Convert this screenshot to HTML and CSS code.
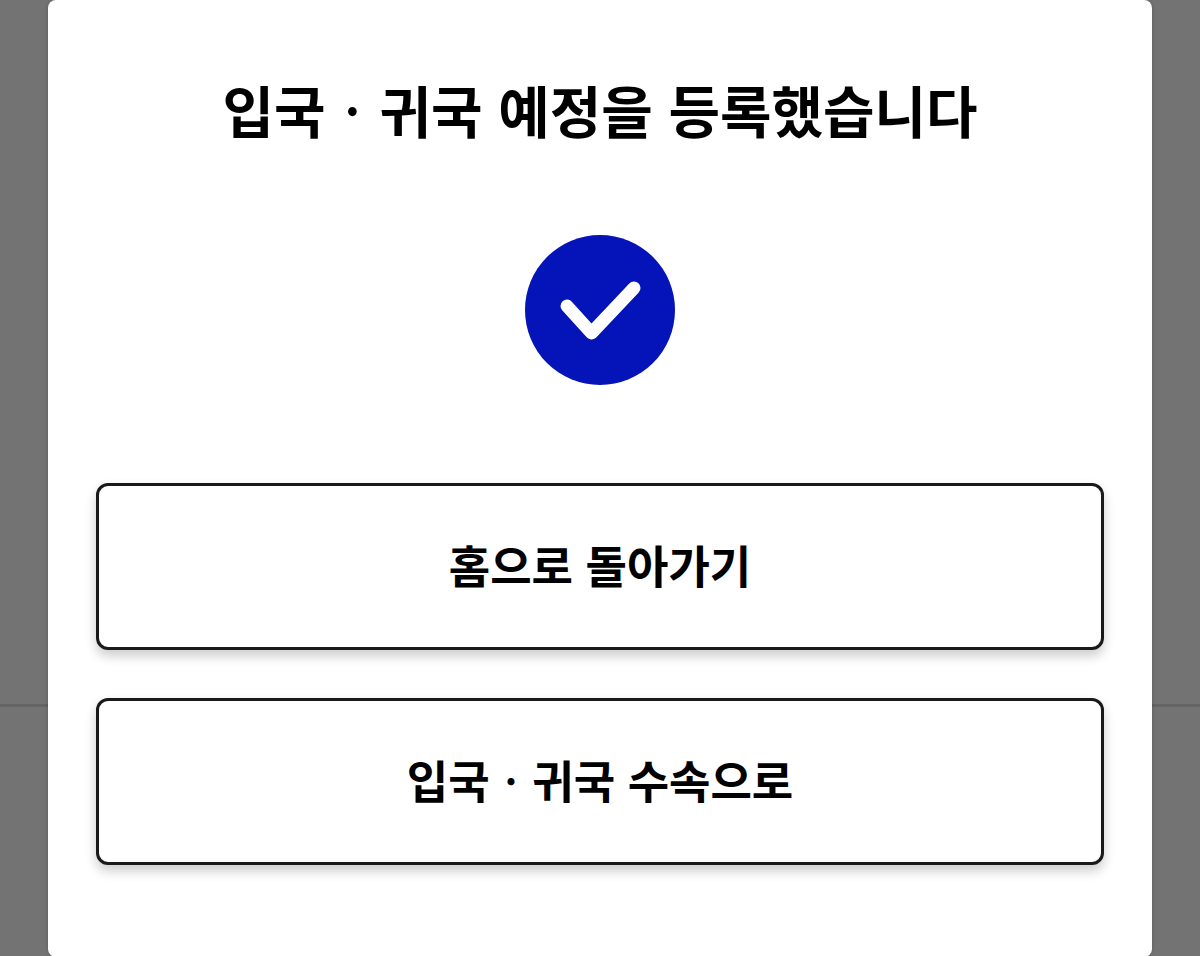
FILE: index.html
```html
<!DOCTYPE html>
<html lang="ko">
<head>
	<meta charset="UTF-8">
	<meta name="viewport" content="width=device-width, initial-scale=1">
	<title>입국 · 귀국 예정</title>
	<link rel="stylesheet" href="styles.css">
</head>
<body>
	<div class="page-line"></div>
	<main class="modal" role="dialog" aria-labelledby="title">
		<h1 class="title" id="title">입국 <span class="dot">·</span> 귀국 예정을 등록했습니다</h1>
		<svg class="check" viewBox="0 0 150 150" aria-hidden="true">
			<circle cx="75" cy="75" r="75" fill="#0514b8"/>
			<path d="M42 71L66.500 98L109 53" fill="none" stroke="#fff" stroke-width="13" stroke-linecap="round" stroke-linejoin="round"/>
		</svg>
		<div class="buttons">
			<button class="btn" type="button">홈으로 돌아가기</button>
			<button class="btn" type="button">입국 <span class="dot">·</span> 귀국 수속으로</button>
		</div>
	</main>
</body>
</html>
```
FILE: styles.css
```css
*{
	box-sizing: border-box;
	margin: 0;
	padding: 0;
}
body{
	position: relative;
	min-height: 100vh;
	padding: 0 48px;
	background-color: #737373;
	font-family: "Noto Sans CJK KR", sans-serif;
	color: #000;
}
/* divider of the page behind the dialog */
.page-line{
	position: absolute;
	top: 704px;
	left: 0;
	right: 0;
	height: 3px;
	background-color: #656565;
}
.modal{
	position: relative;
	display: flex;
	flex-direction: column;
	align-items: center;
	padding: 69px 48px 92px;
	background-color: #fff;
	border-radius: 8px;
	box-shadow: 0 0 4px rgba(0,0,0,0.2);
}
.title{
	font-size: 56px;
	line-height: 80px;
	font-weight: 700;
	text-align: center;
}
.dot{
	margin: 0 2px;
	font-weight: 500;
}
.title .dot{
	margin: 0 3px;
}
.check{
	width: 150px;
	height: 150px;
	margin: 86px 0 98px;
}
.buttons{
	display: flex;
	flex-direction: column;
	gap: 48px;
	width: 100%;
}
.btn{
	width: 100%;
	padding: 48px 24px 52px;
	border: 3px solid #1a1a1a;
	border-radius: 12px;
	background-color: #fff;
	box-shadow: 0 6px 12px rgba(0,0,0,0.2);
	font-family: inherit;
	font-size: 45px;
	line-height: 61px;
	font-weight: 700;
	color: #000;
}
```
